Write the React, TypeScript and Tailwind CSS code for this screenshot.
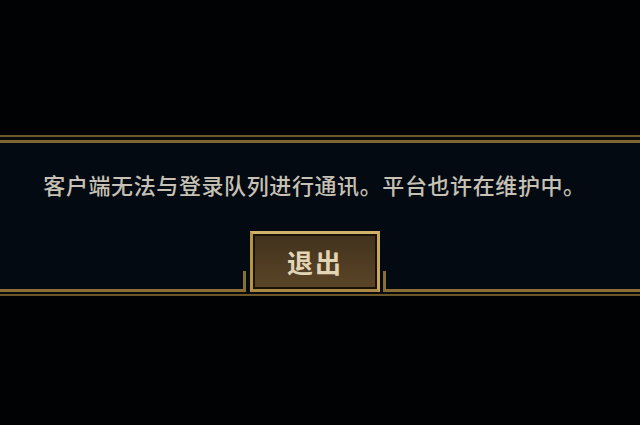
export default function App() {
  return (
    <div
      className="flex h-[425px] w-[640px] flex-col overflow-hidden bg-[#010204]"
      style={{ fontFamily: '"Noto Sans CJK SC", "Noto Sans", sans-serif' }}
    >
      <div className="h-[135px]" />
      {/* top double rule */}
      <div className="h-[2px] bg-[#6e5a2c]" />
      <div className="h-[3px] bg-[#0a0b0d]" />
      <div className="h-[3px] bg-[#7f6733]" />

      {/* panel */}
      <div className="flex flex-col bg-[#040a12]">
        <p className="pr-[11px] pt-[27px] text-center text-[22px] font-medium leading-[28px] tracking-[0.6px] text-[#c6c1b4]">
          客户端无法与登录队列进行通讯。平台也许在维护中。
        </p>
        <div className="mt-[33px] flex h-[61px] items-end">
          <div className="h-[21px] w-[246px] border-r-[3px] border-b-[3px] border-[#8a6e35]" />
          <div className="ml-[4px] h-[61px] w-[130px] border-[3px] border-t-[#d2b26a] border-r-[#c9a85e] border-b-[#a98a44] border-l-[#b8963f] bg-[#1a1209] p-[2px]">
            <div className="flex h-full w-full items-center justify-center bg-gradient-to-b from-[#42321d] to-[#5b4527]">
              <span className="text-[26px] font-bold leading-none tracking-[2px] text-[#e2d5b5]">
                退出
              </span>
            </div>
          </div>
          <div className="ml-[3px] h-[21px] flex-1 border-b-[3px] border-l-[3px] border-[#8a6e35]" />
        </div>
      </div>

      {/* bottom double rule */}
      <div className="h-[2px] bg-[#0b0c0e]" />
      <div className="h-[2px] bg-[#6b5629]" />
      <div className="flex-1 bg-[#010204]" />
    </div>
  );
}
